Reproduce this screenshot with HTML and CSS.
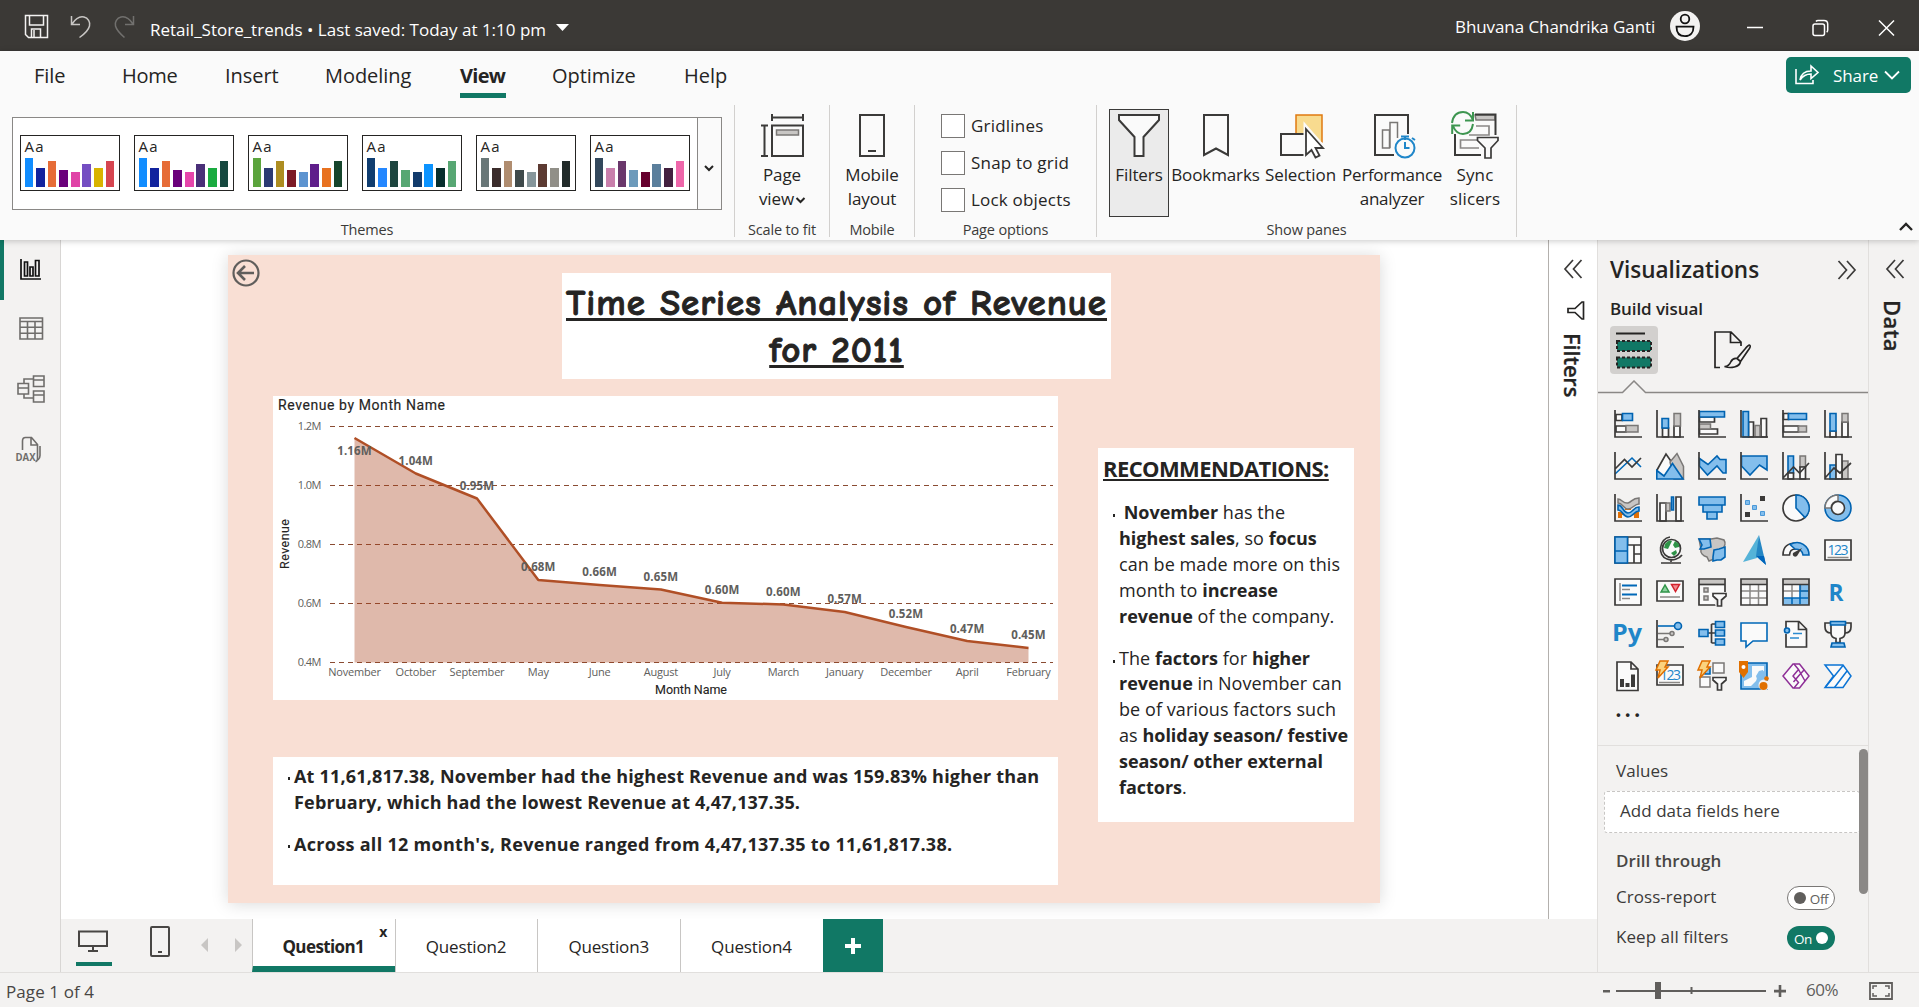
FILE: index.html
```html
<!DOCTYPE html>
<html lang="en">
<head>
<meta charset="utf-8">
<title>Retail_Store_trends</title>
<link rel="stylesheet" href="styles.css">
</head>
<body>
<header class="titlebar">
  <svg class="tb-icons" width="120" height="51" viewBox="0 0 120 51" fill="none">
    <path d="M25.5 15.5h22v22h-19l-3-3zM29.500 15.500v9.500h14v-9.500M31.500 37v-8h9v8M34 30v7" stroke="#f3f2f1" stroke-width="1.5"/>
    <path d="M71.500 16v8.500h8.500M72 24c4-6 8-8 12-7s6.500 5 5.500 9-5 8-10 11.500" stroke="#c8c6c4" stroke-width="1.500"/>
  </svg>
  <svg class="redo" width="24" height="51" viewBox="0 0 24 51" fill="none"><path d="M19.500 16v8.500H11M19 24c-4-6-8-8-12-7s-6.500 5-5.500 9 5 8 9 11.500" stroke="#71706e" stroke-width="1.500"/></svg>
  <span class="doc-name">Retail_Store_trends • Last saved: Today at 1:10 pm</span>
  <svg class="caret" width="13" height="8"><path d="M0 0h13L6.500 7z" fill="#fff"/></svg>
  <span class="user">Bhuvana Chandrika Ganti</span>
  <svg class="avatar" width="30" height="30" viewBox="0 0 30 30" fill="none" stroke="#111" stroke-width="1.800"><circle cx="15" cy="15" r="15" fill="#f3f2f1" stroke="none"/><circle cx="15" cy="8" r="4.300"/><path d="M6.500 15.700h17c0 6-3 9.500-8.500 9.500s-8.500-3.500-8.500-9.500z"/></svg>
  <svg class="win" width="150" height="20" viewBox="0 0 150 20" fill="none" stroke="#fff" stroke-width="1.500"><path d="M1 8.500h16M133 1.500l15 15M148 1.500l-15 15"/><rect x="67" y="5" width="11.500" height="11.500" rx="2"/><path d="M70 2.500c.5-.7 1-1 2-1h6c2.500 0 3.700 1.500 3.700 3.500v6c0 1-.3 1.700-1 2.300"/></svg>
</header>

<section class="ribbon">
  <nav class="tabs">
    <a class="t-file">File</a><a class="t-home">Home</a><a class="t-insert">Insert</a><a class="t-model">Modeling</a><a class="t-view active">View</a><a class="t-opt">Optimize</a><a class="t-help">Help</a>
    <button class="share">
      <svg width="24" height="22" viewBox="0 0 24 22" fill="none" stroke="#fff" stroke-width="1.600"><path d="M1 5v14.500h17V16M5 16c1-6 4.500-9 11-9V2l7 6.500-7 6v-4.500c-5 0-8 1.500-11 6z"/></svg>
      <span>Share</span>
      <svg width="16" height="10" viewBox="0 0 16 10" fill="none" stroke="#fff" stroke-width="1.800"><path d="M1 1.500l7 7 7-7"/></svg>
    </button>
  </nav>
  <div class="groups">
    <div class="group g-themes">
      <div class="gallery">
        <div class="card"><b>Aa</b><div class="bars"><i style="background:#118dff"></i><i style="background:#12239e"></i><i style="background:#e66c37"></i><i style="background:#6b007b"></i><i style="background:#e044a7"></i><i style="background:#744ec2"></i><i style="background:#d9b300"></i><i style="background:#d64550"></i></div></div>
        <div class="card"><b>Aa</b><div class="bars"><i style="background:#118dff"></i><i style="background:#12239e"></i><i style="background:#e66c37"></i><i style="background:#6b007b"></i><i style="background:#e645ab"></i><i style="background:#4a2f78"></i><i style="background:#1aab40"></i><i style="background:#15483f"></i></div></div>
        <div class="card"><b>Aa</b><div class="bars"><i style="background:#5ba43c"></i><i style="background:#2c3a73"></i><i style="background:#ad8d21"></i><i style="background:#7c1a26"></i><i style="background:#5d94d0"></i><i style="background:#5f1e8b"></i><i style="background:#e87220"></i><i style="background:#16452c"></i></div></div>
        <div class="card"><b>Aa</b><div class="bars"><i style="background:#103d70"></i><i style="background:#2487ff"></i><i style="background:#1d453f"></i><i style="background:#57a773"></i><i style="background:#123b6c"></i><i style="background:#0b93ff"></i><i style="background:#062e2d"></i><i style="background:#57a773"></i></div></div>
        <div class="card"><b>Aa</b><div class="bars"><i style="background:#697778"></i><i style="background:#3b2c2b"></i><i style="background:#b08d70"></i><i style="background:#3f4a4b"></i><i style="background:#86969b"></i><i style="background:#5c3a32"></i><i style="background:#918f88"></i><i style="background:#222b2a"></i></div></div>
        <div class="card"><b>Aa</b><div class="bars"><i style="background:#33485c"></i><i style="background:#c97fac"></i><i style="background:#6a376b"></i><i style="background:#6c9abb"></i><i style="background:#66002e"></i><i style="background:#5b7f9c"></i><i style="background:#43203f"></i><i style="background:#ee66aa"></i></div></div>
        <div class="more"><svg width="10" height="7" fill="none" stroke="#252423" stroke-width="2"><path d="M1 1l4 4 4-4"/></svg></div>
      </div>
      <span class="glabel">Themes</span>
    </div>
    <div class="group g-scale">
      <div class="tool">
        <svg width="44" height="46" viewBox="0 0 44 46" fill="none" stroke="#3b3a39" stroke-width="2"><path d="M12 1v7M43 1v7M12 4.500h31M1 12.500h7M1 43h7M4.500 12.500V43"/><rect x="12" y="12.500" width="31" height="30.500"/><rect x="16.500" y="17" width="22" height="5" fill="#c8c6c4" stroke="#797775" stroke-width="1.500"/></svg>
        <span>Page<br>view<svg width="9" height="7" viewBox="0 0 9 7" fill="none" stroke="#252423" stroke-width="2"><path d="M.5 1l4 4 4-4"/></svg></span>
      </div>
      <span class="glabel">Scale to fit</span>
    </div>
    <div class="group g-mobile">
      <div class="tool">
        <svg width="26" height="46" viewBox="0 0 26 46" fill="none" stroke="#3b3a39" stroke-width="2"><rect x="1" y="2" width="24" height="41"/><path d="M9 38h8"/></svg>
        <span>Mobile<br>layout</span>
      </div>
      <span class="glabel">Mobile</span>
    </div>
    <div class="group g-opts">
      <div class="checks"><label><i></i>Gridlines</label><label><i></i>Snap to grid</label><label><i></i>Lock objects</label></div>
      <span class="glabel">Page options</span>
    </div>
    <div class="group g-panes">
      <div class="tools">
        <div class="tool on w-fil">
          <svg width="42" height="46" viewBox="0 0 42 46" fill="#fafafa" stroke="#3b3a39" stroke-width="2"><path d="M1 2h40v5L25.500 24v19h-9V24L1 7z"/></svg><span>Filters</span></div>
        <div class="tool w-book">
          <svg width="26" height="46" viewBox="0 0 26 46" fill="#fafafa" stroke="#3b3a39" stroke-width="2"><path d="M1 2h24v40L13 35.500 1 42z"/></svg><span>Bookmarks</span></div>
        <div class="tool w-sel">
          <svg width="46" height="46" viewBox="0 0 46 46" fill="#fafafa" stroke="#3b3a39" stroke-width="2"><rect x="18" y="2" width="26" height="27" fill="#f8db8f" stroke="#e07a10" stroke-width="1.500"/><rect x="3" y="21" width="25" height="21"/><path d="M28 15v28l6-5 4 7.500 5-2-4-8h7z" stroke="#fafafa" stroke-width="5"/><path d="M28 16v26l5.500-5 4 7.500 4-2-4-7.500h7.500z" stroke-width="1.800" fill="#fff"/></svg><span>Selection</span></div>
        <div class="tool w-perf">
          <svg width="36" height="46" viewBox="0 0 36 46" fill="#fafafa" stroke="#3b3a39" stroke-width="2"><path d="M20 42H1V2h33v19"/><path d="M8.500 35V17h7v18zM16 35V9.500h7.500V25" stroke="#797775" stroke-width="1.500"/><circle cx="31" cy="35" r="9.500" stroke="#1f86c9"/><path d="M31 29v6h4.500M27 23.500h8M31 24v3M38 25l3 2" stroke="#1f86c9" fill="none"/></svg><span>Performance<br>analyzer</span></div>
        <div class="tool w-sync">
          <svg width="48" height="48" viewBox="0 0 48 48" fill="none" stroke="#3b3a39" stroke-width="2"><path d="M24 5h20v5H25z" fill="#c8c6c4" stroke="#797775" stroke-width="1.500"/><path d="M24 4.500h20.500V25M4 24v21h26"/><path d="M25 16h13v9H18M26 30H9.500v8H28" stroke="#8a8886" stroke-width="1.700"/><path d="M26.500 27.500H47v3L40 38v10h-6V38l-7.500-7.500z" fill="#fafafa" stroke-width="1.700"/><path d="M1 13C2 6 6 2 12 2c5 0 8 3 10 8M22 2v8.500h-8M22 14c-1 7-5 10-10 10-5 0-8-3-10-8M1.200 24v-8.500h8" stroke="#3d9550"/></svg><span>Sync<br>slicers</span></div>
      </div>
      <span class="glabel">Show panes</span>
    </div>
    <svg class="collapse" width="14" height="9" viewBox="0 0 14 9" fill="none" stroke="#252423" stroke-width="2.300"><path d="M1 8l6-6 6 6"/></svg>
  </div>
</section>

<main class="main">
  <aside class="rail">
    <svg width="60" height="240" viewBox="0 0 60 240" fill="none" stroke="#6f6d6b" stroke-width="1.600">
      <path d="M21 19v20h20M24.500 36V22h3v14zM30 36v-9h3v9zM35.500 36V20.500H39V36z" stroke="#111" stroke-width="1.700"/>
      <path d="M20 78h22.500v21H20zM20 81.500h22.500M20 87.300h22.500M20 93.200h22.500M27.500 81.500V99M35 81.500V99"/>
      <path d="M18 143.500h10.500v10.500H18zM18 148h10.500M33.500 136H44v10.500H33.500zM33.500 140H44M33.500 151H44v11H33.500zM33.500 155H44M24 143v-4h9.500M24 154v4h9.500"/>
      <path d="M22.500 210v-9c0-2 1-3.500 3-3.500h6l6 7v15c-.3 1.500-1 2-2 2.300M31 198v7h6M40 206v9.500c0 2-.8 3.500-2 4.500"/>
      <text class="dax" x="15.500" y="221" textLength="20" lengthAdjust="spacingAndGlyphs">DAX</text>
    </svg>
  </aside>
  <div class="workspace">
    <div class="stage">
      <div class="canvas-area">
        <article class="report">
          <svg class="back" width="28" height="28" viewBox="0 0 28 28" fill="none" stroke="#605e5c" stroke-width="2.200"><circle cx="14" cy="14" r="12.500"/><path d="M22 14H7M13 7l-7 7 7 7" stroke-width="2.600"/></svg>
          <h1>Time Series Analysis of Revenue<br>for 2011</h1>
          <div class="cols">
            <div class="left">
              <svg class="chart" width="785" height="304" viewBox="273 396 785 304">
                <text class="ttl" x="278" y="410" textLength="167">Revenue by Month Name</text>
                <g class="ax"><text x="321" y="430">1.2M</text><text x="321" y="489">1.0M</text><text x="321" y="548">0.8M</text><text x="321" y="607">0.6M</text><text x="321" y="666">0.4M</text></g>
                <g class="grid"><path d="M330 426.500h723M330 485.500h723M330 544.500h723M330 603.500h723M330 662.500h723"/></g>
                <path d="M354.500 438L415.800 473.500 477 498.500 538.300 580 599.600 585 660.900 589.500 722.100 602.700 783.400 604.500 844.700 612 906 627 967.200 641 1028.500 648V662.500H354.500z" fill="#a8401a" fill-opacity=".37"/>
                <path d="M354.500 438L415.800 473.500 477 498.500 538.300 580 599.600 585 660.900 589.500 722.100 602.700 783.400 604.500 844.700 612 906 627 967.200 641 1028.500 648" fill="none" stroke="#b04f26" stroke-width="2.500" stroke-linejoin="round"/>
                <g class="val"><text x="354.500" y="455">1.16M</text><text x="415.800" y="465">1.04M</text><text x="477" y="490">0.95M</text><text x="538.300" y="571">0.68M</text><text x="599.600" y="576">0.66M</text><text x="660.900" y="581">0.65M</text><text x="722.100" y="594">0.60M</text><text x="783.400" y="596">0.60M</text><text x="844.700" y="603">0.57M</text><text x="906" y="618">0.52M</text><text x="967.200" y="633">0.47M</text><text x="1028.500" y="639">0.45M</text></g>
                <g class="cat"><text x="354.500" y="676">November</text><text x="415.800" y="676">October</text><text x="477" y="676">September</text><text x="538.300" y="676">May</text><text x="599.600" y="676">June</text><text x="660.900" y="676">August</text><text x="722.100" y="676">July</text><text x="783.400" y="676">March</text><text x="844.700" y="676">January</text><text x="906" y="676">December</text><text x="967.200" y="676">April</text><text x="1028.500" y="676">February</text></g>
                <text class="axt" x="655" y="694" textLength="72">Month Name</text>
                <text class="axt" transform="translate(289 569) rotate(-90)" textLength="50">Revenue</text>
              </svg>
              <div class="notes">
                <p>At 11,61,817.38, November had the highest Revenue and was 159.83% higher than<br>February, which had the lowest Revenue at 4,47,137.35.</p>
                <p class="n2">Across all 12 month's, Revenue ranged from 4,47,137.35 to 11,61,817.38.</p>
              </div>
            </div>
            <div class="recs">
              <h2>RECOMMENDATIONS:</h2>
              <p>&nbsp;<b>November</b> has the<br><b>highest sales</b>, so <b>focus</b><br>can be made more on this<br>month to <b>increase</b><br><b>revenue</b> of the company.</p>
              <p>The <b>factors</b> for <b>higher</b><br><b>revenue</b> in November can<br>be of various factors such<br>as <b>holiday season/ festive</b><br><b>season/ other external</b><br><b>factors</b>.</p>
            </div>
          </div>
        </article>
      </div>
      <aside class="filters">
        <svg width="18" height="18" viewBox="0 0 18 18" fill="none" stroke="#3b3a39" stroke-width="1.700"><path d="M9 0L1 9l8 9M17.500 0l-8 9 8 9"/></svg>
        <svg class="fun" width="18" height="19" viewBox="0 0 18 19" fill="none" stroke="#252423" stroke-width="1.700"><path d="M16.500 1v17h-1.500l-7-6.500H1V7.500h7L15 1z"/></svg>
        <span class="vert">Filters</span>
      </aside>
    </div>
    <footer class="pages">
      <span class="view-desktop"><svg width="30" height="23" viewBox="0 0 30 23" fill="none" stroke="#484644" stroke-width="2"><path d="M1 1.500h28V16H1zM15 16v5M10 21h10"/></svg></span>
      <svg class="phone" width="20" height="31" viewBox="0 0 20 31" fill="none" stroke="#484644" stroke-width="2"><rect x="1" y="1" width="18" height="29" rx="1"/><path d="M8 26h4"/></svg>
      <svg class="arrows" width="41" height="14"><path d="M7 0v14L0 7zM34 0v14l7-7z" fill="#c8c6c4"/></svg>
      <div class="pg cur">Question1<sup>x</sup></div><div class="pg">Question2</div><div class="pg">Question3</div><div class="pg">Question4</div>
      <div class="add"><svg width="18" height="18"><path d="M7 1h4v6h6v4h-6v6H7v-6H1V7h6z" fill="#fff"/></svg></div>
    </footer>
  </div>
  <aside class="viz">
    <div class="viz-head"><h3>Visualizations</h3><svg width="18" height="18" viewBox="0 0 18 18" fill="none" stroke="#3b3a39" stroke-width="1.700"><path d="M.5 0l8 9-8 9M9 0l8 9-8 9"/></svg></div>
    <h4>Build visual</h4>
    <div class="modes">
      <span class="mode"><svg width="38" height="38" viewBox="0 0 38 38"><path d="M1 2.500h29" stroke="#252423" stroke-width="2"/><path d="M2 10h34v10H2zM2 26.500h34v10H2z" fill="#117865" stroke="#252423" stroke-width="2" stroke-dasharray="3 2"/></svg></span>
      <svg class="fmt" width="38" height="38" viewBox="0 0 38 38" fill="none" stroke="#252423" stroke-width="1.700"><path d="M6 36.500H1V1h16l10 10v4M16.500 1v10.500H27M36 14.500c-1-1-3 1-5 3.500l-8 9.500 3.500 3 7.500-11c1.800-2.300 3-4 2-5zM23 27.500c-3-.5-5 1-6 3-1.500 3.500-3 5-6.500 5 6 2 15 1 16-5z"/></svg>
    </div>
    <svg class="notch" width="270" height="14" viewBox="0 0 270 14" fill="none"><path d="M0 12.500h24.500L36 1l11.500 11.500H270" stroke="#8a8886" stroke-width="1.500"/></svg>
    <div class="icons">
      <svg viewBox="0 0 28 28"><g class="d"><path class="w" d="M2 4.500h6v6H2zM2 16h10v6H2z"/><path d="M1 0v27h27"/></g><path class="b" d="M8.500 3.500h10v7h-10z"/><path class="g" d="M12 15.500h12v6.500H12z"/></svg>
      <svg viewBox="0 0 28 28"><g class="d"><path class="w" d="M6.500 18h6v9h-6zM18 16h6v11h-6z"/><path d="M1 0v27h27"/></g><path class="b" d="M6 8.500h6.500V18H6z"/><path class="g" d="M18 3.500h6.500V16H18z"/></svg>
      <svg viewBox="0 0 28 28"><path class="d w" d="M1.500 7h15v5h-15zM1.500 19h18v5h-18z"/><path class="g" d="M1.500 14h11v5h-11z"/><path class="b" d="M1.500 1.500h25V7h-25z"/><path class="d" d="M1 0v27h27"/></svg>
      <svg viewBox="0 0 28 28"><path class="d w" d="M8.500 12h5v15h-5zM21 8.500h5.500V27H21z"/><path class="g" d="M15 15.500h5V27h-5z"/><path class="b" d="M3 1.500h5.500V27H3z"/><path class="d" d="M1 0v27h27"/></svg>
      <svg viewBox="0 0 28 28"><path class="d w" d="M1.500 3.500h5v6h-5zM1.500 16h15v6h-15z"/><path class="b" d="M6.500 3.500h18v6h-18z"/><path class="g" d="M16.500 16h8v6h-8z"/><path class="d" d="M1 0v27h27"/></svg>
      <svg viewBox="0 0 28 28"><path class="d w" d="M6 21h6v6H6zM18 12h6v15h-6z"/><path class="b" d="M6 3.500h6V21H6z"/><path class="g" d="M18 3.500h6V12h-6z"/><path class="d" d="M1 0v27h27"/></svg>

      <svg viewBox="0 0 28 28"><path class="bl" d="M1 22L18 6l9 9"/><path class="d" d="M1 17L10.500 7.500 18 15l9-9M1 0v27h27"/></svg>
      <svg viewBox="0 0 28 28"><path class="d w" d="M1 18L10 2l9 13-9 11H1z"/><path class="g" d="M14 10l7-8.500 6.500 13V27H18z"/><path class="b" d="M.8 18.500L8 24l8.500-12.500L27 27H.8z"/></svg>
      <svg viewBox="0 0 28 28"><path class="b" d="M1.500 6.500l8.500 6 9-8.500 3 3.500h6V21h-3l-6-7-9.500 9-8-9z"/><path class="d" d="M1 0v27h27"/></svg>
      <svg viewBox="0 0 28 28"><path class="b" d="M1.500 4H27v14l-7.500-5-9.500 10-8.500-9z"/><path class="d" d="M1 0v27h27"/></svg>
      <svg viewBox="0 0 28 28"><path class="b" d="M6 4h5.500v17H6z"/><path class="g" d="M18 4h5.500v11H18z"/><path class="d w" d="M6 21h5.500v6H6zM18 15h5.500v12H18z"/><path class="d" d="M1 0v27h27M1 26l10.500-11 6 6L27 11"/></svg>
      <svg viewBox="0 0 28 28"><path class="b" d="M6 13h6v14H6z"/><path class="g" d="M18 9h6v18h-6z"/><path class="d w" d="M12 2.500h6V27h-6z"/><path class="d" d="M1 0v27h27M1 26l9-10 6 5 11-10"/></svg>

      <svg viewBox="0 0 28 28"><path d="M4 19.500h5l5 1 6-1h5M4 22.500h4M20 22.500h5M11 14.500h6" fill="none" stroke="#e06f05" stroke-width="3.200"/><path class="g" d="M4 5c4 0 5 5 10 4 4-1 4-5 11-5v6c-5 0-6 5-11 5S9 9 4 9z"/><path class="b" d="M4 11c5 0 5 8 10 8s5-6 11-6v4c-5 0-6 6-11 6S9 16 4 16z"/><path class="d" d="M1 0v27h27"/></svg>
      <svg viewBox="0 0 28 28"><path class="d w" d="M4 9h6v18H4zM20 3h5v24h-5z"/><path class="g" d="M10 9h4v8h-4z"/><path class="b" d="M15.500 3h2v13h-2z"/><path class="d" d="M1 0v27h27"/></svg>
      <svg viewBox="0 0 28 28"><path class="b" d="M1 3h26v8H1zM5 11h19v7H5zM9 18h10v7H9z"/></svg>
      <svg viewBox="0 0 28 28"><path fill="#83beec" stroke="#4a98d8" d="M5.500 6.500h4v4h-4zM12.500 11.500h4v4h-4zM20.500 17.500h4v4h-4z"/><path fill="#3b3a39" d="M20 2h5v5h-5zM5 18h5v5H5z"/><path class="d" d="M1 0v27h27"/></svg>
      <svg viewBox="0 0 28 28"><circle class="d w" cx="14" cy="14" r="13"/><path class="b" d="M14 1v13l9 9.500A13 13 0 0 0 14 1z"/></svg>
      <svg viewBox="0 0 28 28"><circle class="b" cx="14" cy="14" r="13"/><path d="M14 1A13 13 0 0 0 1 14h6a7 7 0 0 1 7-7z" fill="#fafafa" stroke="#797775" stroke-width="1.500"/><circle cx="14" cy="14" r="6.500" fill="#fafafa" stroke="#3b3a39" stroke-width="1.600"/></svg>

      <svg viewBox="0 0 28 28"><path class="d w" d="M1 1h26v26H1zM13.500 9H27M20 9v18M20 18h7M13.500 1v8"/><path class="b" d="M1 1h12.500v26H1zM1 15h12.500"/></svg>
      <svg viewBox="0 0 28 28"><circle class="d w" cx="15.500" cy="12.500" r="9"/><path fill="#2f9348" d="M9 8c3-4 6-4 7-3l-2 4-2 4-4-1zM19 5l4 3v3l-4 1-2-3zM15 17l5-3 1 3-3 3z"/><path class="d" d="M14 1C3 2 1 20 11 23c6 2 12 0 15-4M15 23v3M5 27h20"/></svg>
      <svg viewBox="0 0 28 28"><path class="g" d="M1 3h12l6-1 7 2c2 3 1 7-2 9l-7 2-1 8-5 2-2-4c-4-1-7-4-6-8z"/><path class="b" d="M1 3h11l1 8-7 2H2l2-4zM16 14l5-1 6-2v10l-4 3h-4l-4 1v-4z"/></svg>
      <svg viewBox="0 0 28 28"><path d="M19-1L3 26l14-4z" fill="#55b3d8"/><path d="M19-1l7 30-10-9z" fill="#2587c4"/><path d="M16 20l10 9-2-9z" fill="#0065bb"/></svg>
      <svg viewBox="0 0 28 28"><path class="d w" d="M1 19C1 11 6 7 14 7v6c-5 0-6 2-6.500 6z"/><path class="b" d="M8 8.500C18 3 27 10 27 19h-6c-.5-4-3-6-8-6z"/><path d="M11 17l9-5-5 8c-3 2-5-1-4-3z" fill="#3b3a39"/></svg>
      <svg viewBox="0 0 28 28"><path class="d w" d="M1 4h26v20H1z"/><path d="M3.500 21.500h21" stroke="#8a8886" stroke-width="1.500"/><text class="n" x="3.500" y="18.500" textLength="21">123</text></svg>

      <svg viewBox="0 0 28 28"><path class="d w" d="M1 1h26v26H1z"/><path d="M6 5v18M8 11.500h8M8 20.500h8" stroke="#8a8886" stroke-width="1.500"/><path d="M8 7.500h15M8 16.500h15" stroke="#0068b8" stroke-width="2.200"/></svg>
      <svg viewBox="0 0 28 28"><path class="d w" d="M1 3h26v20H1z"/><path d="M4 19h20" stroke="#8a8886" stroke-width="1.500"/><path d="M5 14l4-7 4 7z" fill="#8bd19d" stroke="#2f9348" stroke-width="1.500"/><path d="M15.500 6.500h8l-4 7z" fill="#f08a90" stroke="#d2222d" stroke-width="1.500"/></svg>
      <svg viewBox="0 0 28 28"><path class="d w" d="M1 1h26v26H1z"/><path fill="#c8c6c4" d="M2 2h24v4H2z"/><path class="d" d="M1 6.500h26"/><path class="g" d="M6 10h4v4H6zM6 18h4v4H6z"/><path fill="#f3f2f1" d="M13 14h16v15H18z"/><path class="d w" d="M15 15.500h13v2.500l-4.500 4v6h-4v-6L15 18z"/></svg>
      <svg viewBox="0 0 28 28"><path class="w" d="M1 1h26v26H1z"/><path d="M1 13h26M1 20h26M10 6v21M18.500 6v21" stroke="#8a8886" stroke-width="1.500"/><path fill="#c8c6c4" d="M1 1h26v5H1z"/><path class="d" d="M1 6.500h26M1 1h26v26H1z"/></svg>
      <svg viewBox="0 0 28 28"><path class="w" d="M1 1h26v26H1z"/><path d="M18 7h9v20H1v-7h17z" fill="#83beec"/><path d="M1 13h26M10 6v14M18.500 6v6" stroke="#8a8886" stroke-width="1.500"/><path class="bl" d="M18 7v19M10 20v6M2 20h24M18 13h8"/><path fill="#c8c6c4" d="M1 1h26v5H1z"/><path class="d" d="M1 6.500h26M1 1h26v26H1z"/></svg>
      <svg viewBox="0 0 28 28"><text class="ltr" x="4.500" y="22.500" textLength="15" lengthAdjust="spacingAndGlyphs">R</text></svg>

      <svg viewBox="0 0 28 28"><text class="ltr" x="-2" y="20.500" textLength="30" lengthAdjust="spacingAndGlyphs">Py</text></svg>
      <svg viewBox="0 0 28 28"><path d="M2 13.500h12M2 19.500h6" stroke="#797775" stroke-width="1.500"/><circle class="g" cx="16" cy="13.500" r="2"/><circle class="g" cx="10" cy="19.500" r="2"/><path class="bl" d="M2 6h17"/><circle class="b" cx="22" cy="6" r="3.500"/><path class="d" d="M1 0v27h27"/></svg>
      <svg viewBox="0 0 28 28"><path class="d" d="M10 13h7M13.500 4v19M13.500 4H17M13.500 23H17"/><path class="b" d="M1 9.500h9v7H1zM17.500 1.500h9v6h-9zM17.500 10h9v6h-9zM17.500 19h9v6h-9z"/></svg>
      <svg viewBox="0 0 28 28"><path d="M1 3h26v18H13l-7 6v-6H1z" fill="#fafafa" stroke="#0068b8" stroke-width="1.600"/></svg>
      <svg viewBox="0 0 28 28"><path class="d w" d="M4 8V1.500h13L24.500 9v18H4V14M16.500 1.500V9.500h8"/><path d="M11 13.500h9M8 18h9" stroke="#2b8ad0" stroke-width="1.600"/><circle class="b" cx="5" cy="10.500" r="2.500"/></svg>
      <svg viewBox="0 0 28 28"><path class="d" d="M7 3H1v4c0 4 2 6 6 6M21 3h6v4c0 4-2 6-6 6"/><path class="d w" d="M7 2h14v11c0 3-2 5-5 5.500v4h-4v-4c-3-.5-5-2.500-5-5.500z"/><path class="b" d="M6.500 1.500h15V5h-15zM7 27h14l-1-4H8z"/></svg>

      <svg viewBox="0 0 28 28"><path class="d w" d="M3 0h14l7 7v21.500H3zM17 0v7h7"/><path fill="#3b3a39" d="M6 17h4v8H6zM11.500 21h4v4h-4zM17 12.500h4V25h-4z"/></svg>
      <svg viewBox="0 0 28 28"><path class="d w" d="M1 3h26v20H1z"/><path d="M3 20.500h21" stroke="#8a8886" stroke-width="1.500"/><text class="n" x="4" y="17.500" textLength="21">123</text><path class="o" d="M4-1h8L9 5h3L2 16l2-8H0z"/></svg>
      <svg viewBox="0 0 28 28"><path class="g wf" d="M15 1h11v10H15zM2 15h10v10H2z"/><path class="b" d="M7 6h5v6H7z"/><path class="d w" d="M15 15.500h13v2.500l-4.500 4v6h-4v-6L15 18z"/><path class="o" d="M4-1h8L9 5h3L2 16l2-8H0z"/></svg>
      <svg viewBox="0 0 28 28"><path class="b" d="M1 1h26v26H1z"/><path d="M12 4h12v5l-5 2-3 8-5 5H4v-5l8-4z" fill="#fafafa"/><path d="M19 9l4-1 2 6-7 6-2-6z" fill="#83beec"/><circle cx="24" cy="23" r="5.500" fill="#f3f2f1"/><path d="M-1-1h9v11L3.500 16-1 10z" fill="#e07000"/><circle cx="3.500" cy="5" r="2" fill="#fff"/><circle cx="23.500" cy="24" r="4" fill="#e07000"/><circle cx="26.500" cy="16.500" r="2.300" fill="#e07000"/></svg>
      <svg viewBox="0 0 28 28" fill="#fafafa" stroke="#8e2f97" stroke-width="1.500"><path d="M11 2h6.500L27 14l-9.500 12H11L1 14z"/><path d="M12 2l4.500 5.500-5.500 6.500 5.500 6.500L12 26M16.500 7.500l6.500 11.500M22 8L16.500 14l-5 6M11 14l5.500-6.500" fill="none"/></svg>
      <svg viewBox="0 0 28 28" fill="#fafafa" stroke="#0b74d5" stroke-width="1.500"><path d="M1 3h18l8 11-8 11.500H1L9.500 14z"/><path d="M1.500 25L19 3.500M10.500 25.500L23 9" fill="none"/></svg>
    </div>
    <div class="dots">...</div>
    <div class="wells">
      <div class="wl">Values</div>
      <div class="drop">Add data fields here</div>
      <div class="wl drill">Drill through</div>
      <div class="row"><span>Cross-report</span><span class="tog off"><i></i>Off</span></div>
      <div class="row"><span>Keep all filters</span><span class="tog yes">On<i></i></span></div>
      <div class="sb"></div>
    </div>
  </aside>
  <aside class="data">
    <svg width="18" height="18" viewBox="0 0 18 18" fill="none" stroke="#3b3a39" stroke-width="1.700"><path d="M9 0L1 9l8 9M17.500 0l-8 9 8 9"/></svg>
    <span class="vert">Data</span>
  </aside>
</main>

<div class="status">
  <span class="pgno">Page 1 of 4</span>
  <svg class="zoom" width="186" height="20" viewBox="0 0 186 20"><path d="M0 9h7v2.500H0zM13 9h150v2H13zM52 1h6v17h-6zM87.500 6h2v7h-2zM171 8.800h12v2.600h-12zM175.700 4h2.600v12h-2.600z" fill="#605e5c"/></svg>
  <span class="pct">60%</span>
  <svg class="fit" width="24" height="18" viewBox="0 0 24 18" fill="none" stroke="#605e5c" stroke-width="1.800"><path d="M1 1h22v16H1z"/><path d="M4 7V4h4M16 4h4v3M20 11v3h-4M8 14H4v-3" stroke-width="1.500"/></svg>
</div>
</body>
</html>
```
FILE: styles.css
```css
* { box-sizing: border-box; }
body { margin: 0; width: 1919px; height: 1007px; overflow: hidden; display: flex; flex-direction: column; font-family: "Open Sans", "Noto Sans", sans-serif; color: #252423; background: #fff; }
h1, h2, h3, h4, p { margin: 0; }
svg { display: block; flex: none; overflow: visible; }
i { font-style: normal; display: block; }

.titlebar { height: 51px; flex: none; background: #3b3936; color: #fff; display: flex; align-items: center; font-size: 17px; white-space: nowrap; }
.tb-icons { margin-right: -6px; }
.redo { margin-right: 12px; }
.doc-name { width: 396px; letter-spacing: 0; padding-top: 7px; }
.caret { margin: 4px 0 0 10px; }
.user { margin-left: auto; width: 201px; font-size: 17px; letter-spacing: -.08px; padding-top: 1px; }
.avatar { margin-left: 14px; }
.win { margin: 6px 23px 0 46px; }

.ribbon { height: 189px; flex: none; background: #fafafa; position: relative; z-index: 2; box-shadow: 0 1px 6px rgba(0,0,0,.22); display: flex; flex-direction: column; }
.tabs { height: 54px; display: flex; align-items: flex-start; padding-left: 34px; font-size: 20px; letter-spacing: -.05px; white-space: nowrap; }
.tabs a { height: 47px; line-height: 49px; }
.t-file { width: 88px; }
.t-home { width: 103px; letter-spacing: -.3px; }
.t-insert { width: 100px; }
.t-model { width: 135px; }
.t-view { width: 46px; margin-right: 46px; }
.t-opt { width: 132px; }
.tabs .active { font-weight: 700; letter-spacing: -.7px; border-bottom: 5px solid #117865; }
.share { margin: 6px 8px 0 auto; width: 125px; height: 36px; border: 0; border-radius: 5px; background: #117865; color: #fff; font: 17px "Open Sans", sans-serif; letter-spacing: -.1px; display: flex; align-items: center; padding: 0 11px 0 9px; }
.share span { margin: 0 6px 0 14px; width: 45px; }
.groups { flex: 1; display: flex; }
.group { height: 132px; border-right: 1px solid #d2d0ce; display: flex; flex-direction: column; align-items: center; justify-content: space-between; }
.glabel { font-size: 14.500px; letter-spacing: -.15px; line-height: 15px; color: #3b3a39; }
.g-themes { width: 735px; padding-top: 12px; }
.gallery { width: 710px; height: 93px; border: 1px solid #8a8886; background: #fff; display: flex; align-items: center; gap: 14px; padding-left: 7px; margin-left: -1px; }
.card { width: 100px; height: 56px; border: 1px solid #252423; padding: 1px 4px 3px; display: flex; flex-direction: column; justify-content: space-between; margin-top: -1px; flex: none; }
.card b { font-weight: 400; font-size: 15px; line-height: 19px; letter-spacing: 1.300px; }
.bars { display: flex; gap: 2.800px; align-items: flex-end; height: 29px; }
.bars i { width: 9px; height: 19px; }
.bars i:nth-child(1) { height: 29px; }
.bars i:nth-child(3), .bars i:nth-child(8) { height: 26px; }
.bars i:nth-child(4) { height: 17px; }
.bars i:nth-child(5) { height: 15px; }
.bars i:nth-child(6) { height: 23px; }
.more { align-self: stretch; border-left: 1px solid #8a8886; width: 24px; margin-left: -7px; display: flex; align-items: center; justify-content: center; padding-top: 9px; background: #fafafa; }
.g-scale { width: 95px; padding-top: 8px; }
.g-mobile { width: 85px; padding-top: 8px; }
.tool { display: flex; flex-direction: column; align-items: center; text-align: center; font-size: 17px; line-height: 24.500px; letter-spacing: -.1px; gap: 3px; white-space: nowrap; }
.tool > span { padding-top: .5px; }
.tool span svg { display: inline-block; margin-left: 2px; vertical-align: 1px; }
.g-opts { width: 182px; padding-top: 9px; }
.checks { display: flex; flex-direction: column; gap: 13px; font-size: 17px; letter-spacing: .2px; align-self: flex-start; padding-left: 26px; }
.checks label { display: flex; align-items: center; gap: 6px; height: 24px; line-height: 24px; white-space: nowrap; }
.checks i { width: 24px; height: 24px; border: 1px solid #797775; background: #fff; }
.g-panes { width: 420px; padding-top: 4px; }
.tools { display: flex; align-self: flex-start; padding-left: 12px; }
.tools .tool { height: 108px; padding-top: 4px; }
.tools .on { background: #ebebeb; border: 1px solid #3b3a39; padding-top: 3px; }
.w-fil { width: 60px; }
.w-book { width: 93px; }
.w-sel { width: 77px; }
.w-perf { width: 106px; letter-spacing: -.25px; }
.w-sync { width: 60px; }
.tools .w-sync { gap: 4px; padding-top: 1px; letter-spacing: .15px; }
.collapse { margin: 117px 6px 0 auto; }

.main { flex: 1; min-height: 0; display: flex; }
.rail { width: 61px; flex: none; background: #f3f2f1; border-right: 1px solid #d8d6d4; }
.rail::before { content: ""; display: block; width: 4px; height: 60px; margin-bottom: -60px; background: #117865; }
.dax { font: 700 11px "Open Sans", sans-serif; fill: #6f6d6b; stroke: none; }
.workspace { width: 1536px; flex: none; display: flex; flex-direction: column; }
.stage { flex: 1; min-height: 0; display: flex; }
.canvas-area { flex: 1; overflow: hidden; padding: 15px 0 0 167px; }
.report { position: relative; width: 1152px; height: 648px; background: #f9dfd4; padding-top: 18px; box-shadow: 0 1px 16px rgba(0,0,0,.15); }
.back { position: absolute; left: 4px; top: 4px; }
h1 { width: 549px; height: 106px; margin-left: 334px; background: #fff; font: 700 37px/47px "Comic Sans MS", "Comic Neue", "Open Sans", sans-serif; letter-spacing: .95px; -webkit-text-stroke: .9px #252423; text-align: center; text-decoration: underline; text-decoration-thickness: 3px; text-underline-offset: 3px; padding-top: 7px; white-space: nowrap; }
.cols { display: flex; margin: 17px 0 0 45px; }
.left { width: 785px; display: flex; flex-direction: column; gap: 57px; margin-right: 40px; }
.chart { background: #fff; }
.ttl { font: 400 14px "Roboto", sans-serif; fill: #252423; stroke: #252423; stroke-width: .15px; }
.axt { font: 400 12.500px "Roboto", sans-serif; fill: #252423; stroke: #252423; stroke-width: .1px; }
.ax { font-size: 11px; letter-spacing: -.5px; text-anchor: end; fill: #605e5c; }
.cat { font-size: 11px; letter-spacing: -.2px; text-anchor: middle; fill: #605e5c; }
.val { font-size: 11.500px; font-weight: 700; letter-spacing: .15px; text-anchor: middle; fill: #605e5c; }
.grid path { stroke: #8a4b32; stroke-width: 1.200; stroke-dasharray: 5 4; fill: none; }
.notes { height: 128px; background: #fff; padding: 6px 0 0 21px; font-weight: 700; font-size: 18px; line-height: 26px; letter-spacing: .19px; white-space: nowrap; }
.notes p, .recs p { position: relative; }
.notes p::before, .recs p::before { content: ""; position: absolute; left: -6px; top: 14px; width: 2px; height: 3px; background: #252423; }
.notes .n2 { margin-top: 16px; letter-spacing: .3px; }
.recs { width: 256px; height: 374px; margin-top: 52px; background: #fff; padding: 4px 0 0 21px; font-size: 18px; line-height: 25.900px; letter-spacing: .07px; white-space: nowrap; }
.recs h2 { font-size: 22px; line-height: 32px; margin-left: -16px; letter-spacing: -.6px; text-decoration: underline; text-decoration-thickness: 2px; text-underline-offset: 2px; text-decoration-skip-ink: none; }
.recs p { margin-top: 16px; }
.recs b { letter-spacing: -.03px; }
.filters { width: 49px; border-left: 1px solid #b3b0ad; display: flex; flex-direction: column; padding: 20px 0 0 15px; }
.fun { margin: 23px 0 0 3px; }
.vert { writing-mode: vertical-rl; font-weight: 600; font-size: 22px; line-height: 26px; letter-spacing: -.2px; -webkit-text-stroke: .3px #252423; }
.filters .vert { margin: 13px 0 0 -4px; align-self: flex-start; }

.pages { height: 53px; background: #f3f2f1; display: flex; align-items: stretch; }
.view-desktop { width: 36px; margin-left: 15px; height: 47px; border-bottom: 4px solid #117865; padding: 11px 0 0 2px; }
.phone { margin: 7px 31px 0 38px; }
.arrows { margin: 19px 10px 0 0; }
.pg { width: 142.700px; background: #fff; border-left: 1px solid #c8c6c4; display: flex; align-items: center; justify-content: center; font-size: 17px; letter-spacing: -.15px; position: relative; padding: 2px 1px 0 0; }
.cur { font-weight: 700; letter-spacing: -.6px; border-bottom: 6px solid #117865; padding-top: 8px; }
.cur sup { position: absolute; right: 8px; top: 4px; font-size: 14px; line-height: 18px; }
.add { width: 60px; background: #117865; display: flex; align-items: center; justify-content: center; }

.viz { width: 272px; flex: none; background: #f3f2f1; border-left: 1px solid #e1dfdd; border-right: 1px solid #e1dfdd; display: flex; flex-direction: column; }
.viz-head { display: flex; align-items: center; justify-content: space-between; padding: 15px 12px 0 12px; height: 44px; }
h3 { font-size: 22.500px; font-weight: 600; letter-spacing: 0; line-height: 30px; }
.viz-head + h4 { font-size: 17px; font-weight: 600; letter-spacing: -.1px; line-height: 24px; margin: 13px 0 0 12px; }
.modes { display: flex; margin: 5px 0 0 12px; }
.mode { width: 48px; height: 48px; border-radius: 4px; background: #d2d0ce; padding: 5px; }
.fmt { margin: 5px 0 0 56px; }
.notch { margin-top: 6px; width: 270px; overflow: hidden; }
.icons { display: grid; grid-template-columns: repeat(6, 28px); gap: 14px; margin: 16px 0 0 16px; }
.icons svg { width: 28px; height: 28px; }
.d { stroke: #3b3a39; stroke-width: 1.700; fill: none; }
.d.w, .w { fill: #fafafa; }
.b { stroke: #0063b1; stroke-width: 1.600; fill: #83beec; }
.bl { stroke: #0068b8; stroke-width: 1.600; fill: none; }
.g { stroke: #797775; stroke-width: 1.500; fill: #c8c6c4; }
.wf { fill: #fafafa; }
.o { stroke: #e07000; stroke-width: 1.500; fill: #fbd37e; }
.n { font-size: 14px; fill: #1f86c9; }
.ltr { font-size: 24px; font-weight: 700; fill: #1f86c9; }
.dots { font-size: 25px; font-weight: 600; letter-spacing: 2.500px; line-height: 30px; margin: 2px 0 0 17px; height: 53px; }
.wells { position: relative; flex: 1; border-top: 1px solid #e1dfdd; font-size: 17px; letter-spacing: .05px; color: #3b3a39; white-space: nowrap; }
.wl { line-height: 24px; margin: 13px 0 0 18px; }
.drop { margin: 8px 0 0 6px; width: 256px; height: 42px; border: 1px dashed #c8c6c4; border-radius: 3px; background: #fff; line-height: 37px; padding-left: 15px; }
.drill { font-weight: 600; margin-top: 16px; color: #484644; }
.row { display: flex; align-items: center; justify-content: space-between; height: 24px; line-height: 22px; margin: 13px 33px 0 18px; }
.row > span:first-child { margin-top: -2px; }
.row + .row { margin-top: 16px; }
.tog { width: 48px; height: 24px; border-radius: 12px; font-size: 13.500px; letter-spacing: -.4px; display: flex; align-items: center; justify-content: center; gap: 4px; padding-top: 1px; }
.tog i { width: 12px; height: 12px; border-radius: 6px; background: #605e5c; margin-top: -1px; }
.off { background: #fff; border: 1px solid #797775; color: #605e5c; }
.yes { background: #117865; color: #fff; }
.yes i { background: #fff; }
.sb { position: absolute; right: 0; top: 3px; width: 9px; height: 145px; border-radius: 5px; background: #8a8886; }
.data { flex: 1; background: #f3f2f1; padding: 20px 0 0 17px; }
.data .vert { margin: 22px 0 0 -6px; display: block; letter-spacing: .4px; }

.status { height: 35px; flex: none; background: #f3f2f1; border-top: 1px solid #e1dfdd; display: flex; align-items: center; font-size: 17px; letter-spacing: .1px; color: #484644; padding: 2px 26px 0 6px; }
.zoom { margin: 0 17px 0 auto; }
.pct { width: 36px; font-size: 17px; letter-spacing: -.5px; color: #605e5c; margin: -4px 27px 0 0; }
```
